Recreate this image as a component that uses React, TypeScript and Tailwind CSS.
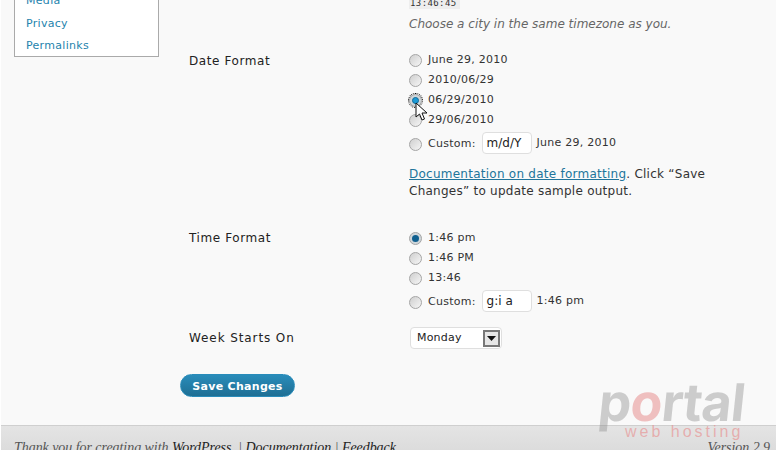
import React from "react";

const sans = { fontFamily: '"DejaVu Sans", Verdana, sans-serif' };

function Radio({ state }: { state?: "checked" | "focus" }) {
  const on = state === "checked" || state === "focus";
  return (
    <span className={`relative block w-[13px] h-[13px] shrink-0 rounded-full border border-[#a5a5a5] flex items-center justify-center ${on ? "bg-[#cfd6da]" : "bg-gradient-to-br from-[#cfcfcf] to-[#f6f6f6]"} ${state === "focus" ? "outline-1 outline-dotted outline-black" : ""}`}>
      {on && <span className={`block w-[7px] h-[7px] rounded-full ${state === "focus" ? "bg-[#1c9ad6] border border-[#0f6a99]" : "bg-[#0f5f8f]"}`} />}
    </span>
  );
}

function Option({ state, label }: { state?: "checked" | "focus"; label: string }) {
  return (
    <div className="flex items-center h-[20px]">
      <Radio state={state} />
      <span className="ml-[6px] text-[11px] leading-[18px] tracking-[0.25px] text-[#333]">{label}</span>
    </div>
  );
}

function Custom({ value, sample }: { value: string; sample: string }) {
  return (
    <div className="flex items-center h-[22px] mt-[2px]">
      <span className="mt-[2px]"><Radio /></span>
      <span className="ml-[6px] text-[11px] tracking-[0.25px] text-[#333] mt-[3px]">Custom:</span>
      <span className="ml-[6px] w-[50px] h-[22px] bg-white border border-[#dfdfdf] rounded-[4px] pl-[4px] text-[12px] leading-[20px] text-[#222]">{value}</span>
      <span className="ml-[5px] text-[11px] tracking-[0.25px] text-[#333] mt-px">{sample}</span>
    </div>
  );
}

export default function App() {
  return (
    <div className="relative w-[776px] h-[450px] overflow-hidden bg-[#f9f9f9] flex flex-col border-l border-white" style={sans}>
      <div className="flex-1 flex min-h-0">
        <aside className="ml-[13px] w-[145px] h-[57px] shrink-0 bg-white border-x border-b border-[#aaaaaa] overflow-hidden pl-[11px] text-[11px] tracking-[0.3px] text-[#2583ad]">
          <div className="h-[22px] leading-[22px] -mt-[10px]">Media</div>
          <div className="h-[22px] leading-[22px] mt-[1px]">Privacy</div>
          <div className="h-[22px] leading-[22px]">Permalinks</div>
        </aside>

        <main className="ml-[30px] w-[560px] flex flex-col">
          <div className="ml-[220px] h-[9px] overflow-hidden">
            <span className="block w-[51px] h-[9px] bg-[#eeeeee] text-[9px] leading-[6px] tracking-[0.4px] text-[#333] pl-[1px]" style={{ fontFamily: '"DejaVu Sans Mono", monospace' }}>13:46:45</span>
          </div>
          <p className="ml-[220px] mt-[7px] text-[12px] leading-[16px] italic text-[#666]">Choose a city in the same timezone as you.</p>

          <div className="flex mt-[18px]">
            <div className="w-[220px] text-[12px] leading-[20px] text-[#222] tracking-[0.6px] mt-[1px]">Date Format</div>
            <div className="w-[320px]">
              <Option label="June 29, 2010" />
              <Option label="2010/06/29" />
              <Option state="focus" label="06/29/2010" />
              <Option label="29/06/2010" />
              <Custom value="m/d/Y" sample="June 29, 2010" />
              <p className="mt-[12px] w-[310px] text-[12px] leading-[17px] tracking-[0.25px] text-[#333]">
                <a className="text-[#21759b] underline">Documentation on date formatting</a>. Click “Save Changes” to update sample output.
              </p>
            </div>
          </div>

          <div className="flex mt-[28px]">
            <div className="w-[220px] text-[12px] leading-[20px] text-[#222] tracking-[0.6px]">Time Format</div>
            <div className="w-[320px]">
              <Option state="checked" label="1:46 pm" />
              <Option label="1:46 PM" />
              <Option label="13:46" />
              <Custom value="g:i a" sample="1:46 pm" />
            </div>
          </div>

          <div className="flex mt-[16px]">
            <div className="w-[221px] text-[12px] leading-[20px] text-[#222] tracking-[0.9px]">Week Starts On</div>
            <div className="w-[92px] h-[22px] -mt-px bg-white border border-[#dfdfdf] rounded-[4px] flex items-center justify-between pl-[6px] pr-[1px] text-[11px] tracking-[0.2px] text-[#222]">
              <span className="mt-px">Monday</span>
              <span className="w-[17px] h-[17px] border-2 border-[#777] bg-[#e6e6e6] flex items-center justify-center">
                <svg width="9" height="5" viewBox="0 0 9 5"><path d="M0 0h9L4.5 5z" fill="#111" /></svg>
              </span>
            </div>
          </div>

          <button className="mt-[25px] w-[115px] h-[23px] pt-[2px] rounded-full border border-[#298cba] bg-gradient-to-b from-[#298cba] to-[#1f6f94] text-white font-bold text-[11px] leading-[19px] tracking-[0.3px] shrink-0 -ml-[9px]">Save Changes</button>
        </main>
      </div>

      <footer className="h-[25px] shrink-0 border-t border-[#cfcfcf] bg-gradient-to-b from-[#e4e4e4] to-[#dcdcdc] pl-[13px] pr-[6px] flex justify-between overflow-hidden italic text-[14px] tracking-[-0.05px] leading-[16px] text-[#555]" style={{ fontFamily: '"Liberation Serif", serif' }}>
        <span className="mt-[14px] whitespace-nowrap">Thank you for creating with <a className="text-[#222]">WordPress</a>. | <a className="text-[#222]">Documentation</a> | <a className="text-[#222]">Feedback</a></span>
        <span className="mt-[14px]">Version 2.9</span>
      </footer>

      <div className="absolute left-[598px] top-[373px] w-[150px] h-[70px] pointer-events-none">
        <div className="text-[52px] leading-[60px] font-bold text-[#8a8a8a]/40 tracking-[-0.8px] -skew-x-6 whitespace-nowrap" style={{ fontFamily: 'Inter, sans-serif' }}>p<span className="text-[#e06a6a]/40">o</span>rtal</div>
        <div className="absolute left-[26px] top-[50px] text-[16px] leading-[18px] tracking-[3px] text-[#e88a8a]/60 whitespace-nowrap" style={{ fontFamily: '"Liberation Sans", sans-serif' }}>web hosting</div>
      </div>

      <svg className="absolute left-[414px] top-[102px]" width="15" height="20" viewBox="0 0 15 20">
        <path d="M1 1v14l3.5-3 2.5 6 2.5-1-2.5-6H12z" fill="#fff" stroke="#111" strokeWidth="1" strokeLinejoin="round" />
      </svg>
    </div>
  );
}
